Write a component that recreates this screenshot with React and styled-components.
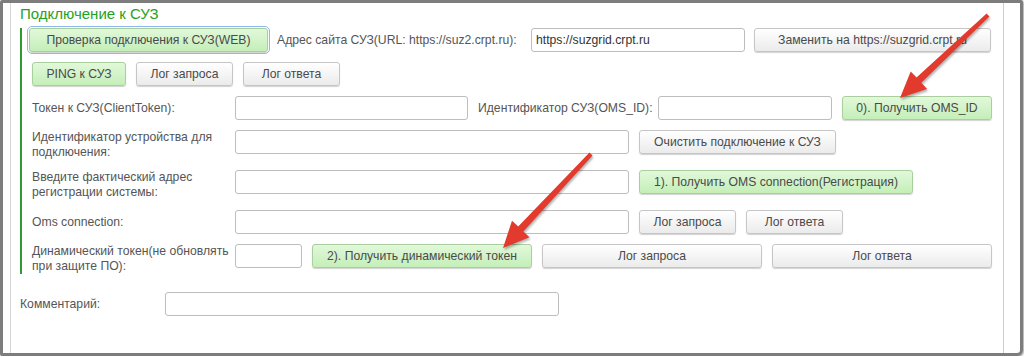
import React from 'react';
import styled, { createGlobalStyle, css } from 'styled-components';

const Global = createGlobalStyle`
  html, body { margin: 0; padding: 0; background: #fff; }
  body { font-family: "Liberation Sans", Arial, sans-serif; }
  * { box-sizing: border-box; }
`;

const Frame = styled.div`
  position: relative;
  width: 1023px;
  height: 356px;
  border: 3px solid #7d7d7d;
  border-radius: 2px 2px 6px 2px;
  box-shadow: 1px 1px 2px rgba(0, 0, 0, 0.35);
  background: #fff;
`;

const Sheet = styled.div`
  margin-left: 7px;
  width: 994px;
  height: 100%;
  border-left: 1px solid #d6d6d6;
  border-right: 1px solid #cfcfcf;
  padding: 2px 0 0 9px;
  display: flex;
  flex-direction: column;
`;

const Title = styled.div`
  font-size: 15px;
  line-height: 18px;
  color: #24a224;
`;

const Group = styled.div`
  margin-top: 5px;
  border-left: 2px solid #2f9a2f;
  padding-left: 10px;
  display: flex;
  flex-direction: column;
  gap: 10px;
`;

const Row = styled.div`
  display: flex;
  align-items: flex-start;
  gap: ${p => p.$gap ?? 10}px;
  margin-left: ${p => p.$shift ?? 0}px;
  margin-top: ${p => p.$top ?? 0}px;
`;

const Label = styled.div`
  flex: none;
  width: ${p => p.$w}px;
  min-height: 24px;
  display: flex;
  align-items: center;
  font-size: 12.2px;
  line-height: 15px;
  color: #555;
  white-space: nowrap;
`;

const Field = styled.div`
  flex: none;
  width: ${p => p.$w}px;
  height: 24px;
  border: 1px solid #bdbdbd;
  border-radius: 3px;
  background: #fff;
  padding: 0 4px;
  display: flex;
  align-items: center;
  font-size: 12.2px;
  color: #333;
  white-space: nowrap;
  overflow: hidden;
`;

const Button = styled.div`
  flex: none;
  width: ${p => p.$w}px;
  height: 24px;
  border-radius: 3px;
  display: flex;
  align-items: center;
  justify-content: center;
  font-size: 12.2px;
  color: #4a4a4a;
  white-space: nowrap;
  border: 1px solid #c6c6c6;
  background: linear-gradient(#ffffff, #ebebeb);
  box-shadow: 0 1px 1px rgba(0, 0, 0, 0.18);
  ${p => p.$green && css`
    border-color: #a9cf9f;
    background: linear-gradient(#e2f8da, #c4efb8);
  `}
  ${p => p.$focus && css`
    outline: 1px solid #8db9ef;
    outline-offset: 1px;
  `}
`;

const Overlay = styled.svg`
  position: absolute;
  left: -3px;
  top: -3px;
  width: 1024px;
  height: 357px;
  pointer-events: none;
  filter: drop-shadow(1px 2px 1px rgba(0, 0, 0, 0.3));
`;

function arrowPoints(x1, y1, x2, y2) {
  const dx = x2 - x1, dy = y2 - y1;
  const len = Math.hypot(dx, dy);
  const ux = dx / len, uy = dy / len;
  const nx = -uy, ny = ux;
  const headLen = 26, headW = 24, shaftW = 7, tailW = 4;
  const bx = x2 - ux * headLen, by = y2 - uy * headLen;
  const p = (x, y) => `${x.toFixed(1)},${y.toFixed(1)}`;
  return [
    p(x1 + nx * tailW / 2, y1 + ny * tailW / 2),
    p(bx + nx * shaftW / 2, by + ny * shaftW / 2),
    p(bx + nx * headW / 2, by + ny * headW / 2),
    p(x2, y2),
    p(bx - nx * headW / 2, by - ny * headW / 2),
    p(bx - nx * shaftW / 2, by - ny * shaftW / 2),
    p(x1 - nx * tailW / 2, y1 - ny * tailW / 2),
  ].join(' ');
}

function Arrow({ from, to }) {
  return <polygon points={arrowPoints(from[0], from[1], to[0], to[1])} fill="#e23a2c" />;
}

export default function App() {
  return (
    <>
      <Global />
      <Frame>
        <Sheet>
          <Title>Подключение к СУЗ</Title>
          <Group>
            <Row $shift={-3} $gap={9}>
              <Button $w={239} $green $focus>Проверка подключения к СУЗ(WEB)</Button>
              <Label $w={245}>Адрес сайта СУЗ(URL: https://suz2.crpt.ru):</Label>
              <Field $w={214}>https://suzgrid.crpt.ru</Field>
              <Button $w={237}>Заменить на https://suzgrid.crpt.ru</Button>
            </Row>
            <Row>
              <Button $w={94} $green>PING к СУЗ</Button>
              <Button $w={97}>Лог запроса</Button>
              <Button $w={97}>Лог ответа</Button>
            </Row>
            <Row>
              <Label $w={193}>Токен к СУЗ(ClientToken):</Label>
              <Field $w={233} />
              <Label $w={170}>Идентификатор СУЗ(OMS_ID):</Label>
              <Field $w={174} />
              <Button $w={150} $green>0). Получить OMS_ID</Button>
            </Row>
            <Row>
              <Label $w={193}>Идентификатор устройства для<br />подключения:</Label>
              <Field $w={394} />
              <Button $w={197}>Очистить подключение к СУЗ</Button>
            </Row>
            <Row>
              <Label $w={193}>Введите фактический адрес<br />регистрации системы:</Label>
              <Field $w={394} />
              <Button $w={274} $green>1). Получить OMS connection(Регистрация)</Button>
            </Row>
            <Row>
              <Label $w={193}>Oms connection:</Label>
              <Field $w={394} />
              <Button $w={97}>Лог запроса</Button>
              <Button $w={97}>Лог ответа</Button>
            </Row>
            <Row>
              <Label $w={193}>Динамический токен(не обновлять<br />при защите ПО):</Label>
              <Field $w={67} />
              <Button $w={220} $green>2). Получить динамический токен</Button>
              <Button $w={220}>Лог запроса</Button>
              <Button $w={220}>Лог ответа</Button>
            </Row>
          </Group>
          <Row $top={18} $gap={0}>
            <Label $w={145}>Комментарий:</Label>
            <Field $w={394} />
          </Row>
        </Sheet>
        <Overlay viewBox="0 0 1024 357">
          <Arrow from={[988, 15]} to={[900, 98]} />
          <Arrow from={[591, 154]} to={[503, 248]} />
        </Overlay>
      </Frame>
    </>
  );
}
